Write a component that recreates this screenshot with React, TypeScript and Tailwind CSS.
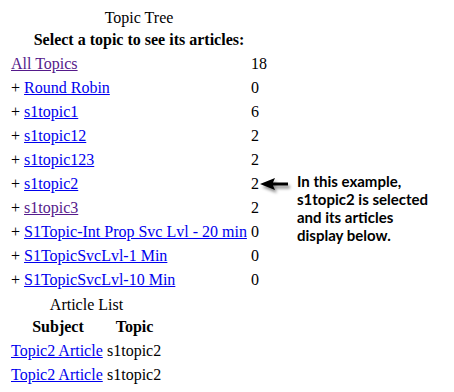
import React from "react";

const rows: { label: string; count: string; plus: boolean; visited?: boolean }[] = [
  { label: "All Topics", count: "18", plus: false, visited: true },
  { label: "Round Robin", count: "0", plus: true },
  { label: "s1topic1", count: "6", plus: true },
  { label: "s1topic12", count: "2", plus: true },
  { label: "s1topic123", count: "2", plus: true },
  { label: "s1topic2", count: "2", plus: true },
  { label: "s1topic3", count: "2", plus: true, visited: true },
  { label: "S1Topic-Int Prop Svc Lvl - 20 min", count: "0", plus: true },
  { label: "S1TopicSvcLvl-1 Min", count: "0", plus: true },
  { label: "S1TopicSvcLvl-10 Min", count: "0", plus: true },
];

export default function App() {
  return (
    <div className="relative p-2 font-['Liberation_Serif',serif] text-[16px] leading-[18px] text-black bg-white min-h-[392px]">
      <div className="w-[262px]">
        <div className="text-center h-[19px] flex items-center justify-center">Topic Tree</div>
        <div className="flex flex-col gap-[2px] p-[2px]">
          <div className="flex h-[22px] items-center justify-center font-bold">
            Select a topic to see its articles:
          </div>
          {rows.map((r) => (
            <div key={r.label} className="flex h-[22px] items-center">
              <div className="w-[240px] pl-[1px] whitespace-nowrap">
                {r.plus ? "+ " : ""}
                <a
                  href="#"
                  className={
                    r.visited ? "underline text-[#551A8B]" : "underline text-[#0000EE]"
                  }
                >
                  {r.label}
                </a>
              </div>
              <div className="pl-[1px]">{r.count}</div>
            </div>
          ))}
        </div>
      </div>
      <div className="w-[157px] mt-[2px]">
        <div className="text-center h-[19px] flex items-center justify-center">Article List</div>
        <div className="flex flex-col gap-[2px] p-[2px]">
          <div className="flex h-[22px] items-center font-bold">
            <div className="w-[96px] text-center">Subject</div>
            <div className="flex-1 text-center">Topic</div>
          </div>
          {[0, 1].map((i) => (
            <div key={i} className="flex h-[22px] items-center whitespace-nowrap">
              <div className="w-[96px] pl-[1px]">
                <a href="#" className="underline text-[#0000EE]">
                  Topic2 Article
                </a>
              </div>
              <div className="pl-[1px]">s1topic2</div>
            </div>
          ))}
        </div>
      </div>

      <svg
        className="absolute left-[256px] top-[174px]"
        width="40"
        height="26"
        viewBox="0 0 40 26"
      >
        <defs>
          <filter id="sh" x="-30%" y="-50%" width="160%" height="200%">
            <feDropShadow dx="2" dy="3" stdDeviation="1.6" floodColor="#000" floodOpacity="0.45" />
          </filter>
        </defs>
        <path
          d="M4 10 L19 4 L17 8.6 L32 8.6 L32 11.4 L17 11.4 L19 16 Z"
          fill="#000"
          filter="url(#sh)"
        />
      </svg>

      <div className="absolute left-[297px] top-[172px] font-['Lato',sans-serif] font-bold text-[15px] leading-[18px] text-black">
        <div>In this example,</div>
        <div>s1topic2 is selected</div>
        <div>and its articles</div>
        <div>display below.</div>
      </div>
    </div>
  );
}
